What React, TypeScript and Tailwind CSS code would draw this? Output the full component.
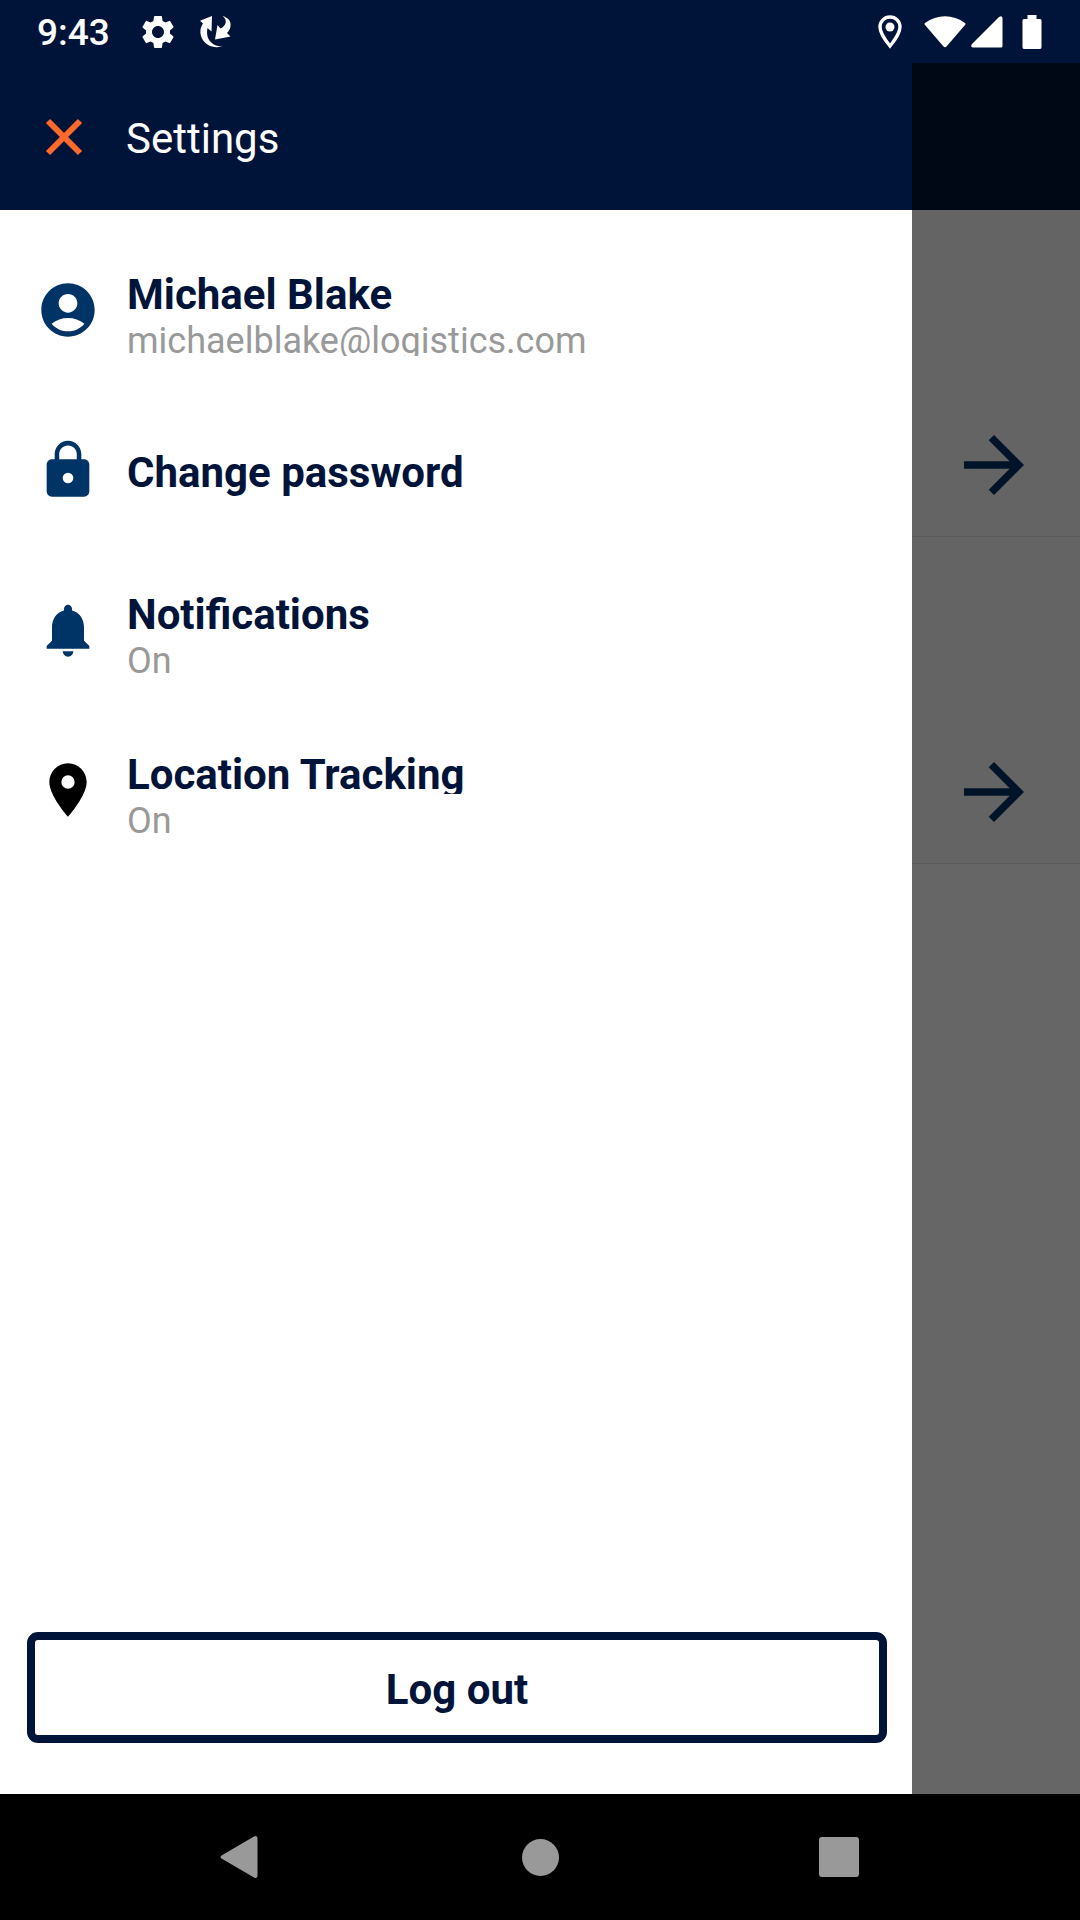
import { MdAccountCircle, MdArrowForward, MdLocationOn, MdNotifications, MdSettings } from "react-icons/md";

const settings = [
  { title: "Michael Blake", detail: "michaelblake@logistics.com", icon: <MdAccountCircle size={64} />, color: "text-[#003366]" },
  { title: "Change password", detail: "", icon: <LockIcon />, color: "text-[#003366]" },
  { title: "Notifications", detail: "On", icon: <MdNotifications size={64} />, color: "text-[#003366]" },
  { title: "Location Tracking", detail: "On", icon: <MdLocationOn size={64} />, color: "text-black" },
];

function LockIcon() {
  return (
    <svg width="64" height="64" viewBox="0 0 24 24" fill="currentColor">
      <path
        fillRule="evenodd"
        d="M18 8h-1V6c0-2.76-2.24-5-5-5S7 3.24 7 6v2H6c-1.1 0-2 .9-2 2v10c0 1.1.9 2 2 2h12c1.1 0 2-.9 2-2V10c0-1.1-.9-2-2-2zM8.7 8V6c0-1.82 1.48-3.2 3.3-3.2s3.3 1.38 3.3 3.2v2zM12 13a2 2 0 1 1 0 4 2 2 0 0 1 0-4z"
      />
    </svg>
  );
}

function StatusBar() {
  return (
    <div className="flex h-[63px] items-center justify-between bg-[#001439] pl-[37px] pr-[38px] text-white">
      <div className="flex items-center">
        <span className="pt-0.5 text-[37px] font-medium leading-[42px]">9:43</span>
        <MdSettings size={40} className="ml-7" />
        <svg className="ml-[22px]" width="32" height="32" viewBox="0 0 32 32" fill="currentColor">
          <path d="M0 4.7L12 0L11.5 15.5L7.5 12C6 19 8 26 16 29.500Q19 30.500 23 30C15 33 6 30 2 22.500C-.5 17 0 12 3 7.500Z" />
          <path d="M22.500 0C29 2 32 6 30 12.500Q29 15 27 17L30.500 20.500L15 23.500L17.500 9L20.500 12.500C26 10 28 4 22.500 0Z" />
        </svg>
      </div>
      <div className="flex items-center">
        <svg width="24" height="34" viewBox="0 0 24 34" fill="none">
          <path d="M12 2C6.400 2 2 6.400 2 12C2 19 12 31 12 31S22 19 22 12C22 6.400 17.600 2 12 2Z" stroke="currentColor" strokeWidth="3.400" />
          <circle cx="12" cy="12" r="4.500" fill="currentColor" />
        </svg>
        <svg className="ml-[22px]" width="42" height="32" viewBox="0 0 42 32" fill="currentColor">
          <path d="M1 7C13-2 29-2 41 7Q42 8 41 9L22.500 30.500Q21 32 19.500 30.500L1 9Q0 8 1 7Z" />
        </svg>
        <svg className="ml-[5px]" width="32" height="32" viewBox="0 0 32 32" fill="currentColor">
          <path d="M28 1Q31 -1 31.500 2V30Q31.500 31.500 30 31.500H2Q-1 31 1 28Z" />
        </svg>
        <svg className="ml-[19px]" width="20" height="34" viewBox="0 0 20 34" fill="currentColor">
          <path d="M5.500 0H14.500V4H18Q19.500 4 19.500 5.500V32Q19.500 34 18 34H2Q.5 34 .5 32V5.500Q.5 4 2 4H5.500Z" />
        </svg>
      </div>
    </div>
  );
}

function RouteList() {
  return (
    <div className="flex h-full flex-col bg-[#fafafa]">
      <div className="h-[147px] bg-[#001439]" />
      {["first", "second"].map((name) => (
        <div key={name} className="flex h-[327px] items-end justify-end border-b border-[#e6e6e6] pb-[26px] pr-[41px]">
          <button aria-label={`Open ${name} item`} className="text-[#003366]">
            <MdArrowForward size={90} />
          </button>
        </div>
      ))}
    </div>
  );
}

function SettingsDrawer() {
  return (
    <aside className="absolute inset-y-0 left-0 right-[168px] flex flex-col bg-white">
      <header className="flex h-[147px] items-center bg-[#001439] pl-[45px] text-white">
        <button aria-label="Close" className="text-[#ff6a2b]">
          <svg width="38" height="38" viewBox="0 0 38 38" stroke="currentColor" strokeWidth="6">
            <path d="M3 3L35 35M35 3L3 35" />
          </svg>
        </button>
        <h1 className="ml-[43px] pt-1 text-[42px] leading-[50px]">Settings</h1>
      </header>

      <nav className="flex flex-col pt-[25px]">
        {settings.map((item) => (
          <button key={item.title} className="flex h-40 items-center pl-9 text-left">
            <span className={`pb-2.5 ${item.color}`}>{item.icon}</span>
            {item.detail ? (
              <span className="ml-[27px]">
                <span className="block h-[39px] overflow-hidden text-[42px] font-bold leading-[39px] text-[#001439]">{item.title}</span>
                <span className="block h-[42px] overflow-hidden text-[36px] leading-[54px] text-[#999999]">{item.detail}</span>
              </span>
            ) : (
              <span className="ml-[27px] pb-1 text-[42px] font-bold leading-[50px] text-[#001439]">{item.title}</span>
            )}
          </button>
        ))}
      </nav>

      <div className="mt-auto pb-[51px] pl-[27px] pr-[25px]">
        <button className="h-[111px] w-full rounded-[11px] border-8 border-[#001439] pt-1 text-[42px] font-bold leading-[50px] text-[#001439]">
          Log out
        </button>
      </div>
    </aside>
  );
}

function NavigationBar() {
  return (
    <div className="flex h-[126px] justify-center bg-black text-[#999999]">
      <button aria-label="Back" className="flex w-[299px] items-center justify-center">
        <svg width="42" height="44" viewBox="0 0 42 44" fill="currentColor">
          <path d="M34 1.500Q37 0 37.500 3V41Q37 44 34 42.500L1.500 23.500Q-.5 22 1.500 20.500Z" />
        </svg>
      </button>
      <button aria-label="Home" className="flex w-[299px] items-center justify-center">
        <span className="size-[37px] rounded-full bg-[#999999]" />
      </button>
      <button aria-label="Recent apps" className="flex w-[299px] items-center justify-center">
        <span className="size-10 rounded-[3px] bg-[#999999]" />
      </button>
    </div>
  );
}

export default function App() {
  return (
    <div className="flex min-h-screen flex-col font-['Roboto',sans-serif]">
      <StatusBar />
      <main className="relative flex-1">
        <RouteList />
        <div className="absolute inset-0 bg-black/60" />
        <SettingsDrawer />
      </main>
      <NavigationBar />
    </div>
  );
}
